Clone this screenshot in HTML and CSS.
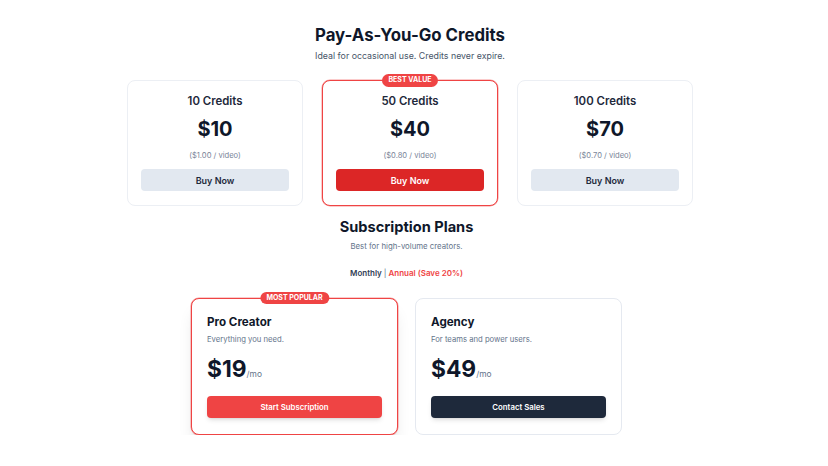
FILE: index.html
```html
<!DOCTYPE html>
<html lang="en">
<head>
<meta charset="utf-8">
<title>Pricing</title>
<link rel="stylesheet" href="styles.css">
</head>
<body>
<main class="page">
  <section class="credits">
    <h1 class="title">Pay-As-You-Go Credits</h1>
    <p class="subtitle">Ideal for occasional use. Credits never expire.</p>
    <div class="credit-grid">
      <div class="credit-card">
        <h3 class="credit-name">10 Credits</h3>
        <div class="credit-price">$10</div>
        <div class="credit-unit">($1.00 / video)</div>
        <button class="btn btn-light">Buy Now</button>
      </div>
      <div class="credit-card featured">
        <span class="badge">BEST VALUE</span>
        <h3 class="credit-name">50 Credits</h3>
        <div class="credit-price">$40</div>
        <div class="credit-unit">($0.80 / video)</div>
        <button class="btn btn-red">Buy Now</button>
      </div>
      <div class="credit-card">
        <h3 class="credit-name">100 Credits</h3>
        <div class="credit-price">$70</div>
        <div class="credit-unit">($0.70 / video)</div>
        <button class="btn btn-light">Buy Now</button>
      </div>
    </div>
  </section>
  <section class="subs">
    <h2 class="subs-title">Subscription Plans</h2>
    <p class="subs-desc">Best for high-volume creators.</p>
    <div class="toggle"><span class="t-month">Monthly</span> <span class="t-sep">|</span> <span class="t-annual">Annual (Save 20%)</span></div>
    <div class="plan-grid">
      <div class="plan-card popular">
        <span class="badge">MOST POPULAR</span>
        <h3 class="plan-name">Pro Creator</h3>
        <p class="plan-desc">Everything you need.</p>
        <div class="plan-price"><span class="amount">$19</span><span class="per">/mo</span></div>
        <button class="btn btn-plan btn-coral">Start Subscription</button>
      </div>
      <div class="plan-card">
        <h3 class="plan-name">Agency</h3>
        <p class="plan-desc">For teams and power users.</p>
        <div class="plan-price"><span class="amount">$49</span><span class="per">/mo</span></div>
        <button class="btn btn-plan btn-dark">Contact Sales</button>
      </div>
    </div>
  </section>
</main>
</body>
</html>
```
FILE: styles.css
```css
* { box-sizing: border-box; }
html, body { margin: 0; padding: 0; background: #ffffff; }
body {
  font-family: Inter, "Noto Sans", "Liberation Sans", sans-serif;
  color: #0f172a;
}
.page { padding-top: 22px; }
h1, h2, h3, p { margin: 0; }

.credits {
  width: 820px;
  display: flex;
  flex-direction: column;
  align-items: center;
}
.title {
  font-size: 16.8px;
  line-height: 26px;
  font-weight: 700;
  color: #0f172a;
}
.subtitle {
  margin-top: 1px;
  font-size: 8.8px;
  line-height: 13px;
  color: #475569;
}
.credit-grid {
  margin-top: 18px;
  display: grid;
  grid-template-columns: repeat(3, 176px);
  gap: 19px;
}
.credit-card {
  position: relative;
  border: 1px solid #eceff4;
  border-radius: 8px;
  padding: 12px 13px 14px;
  display: flex;
  flex-direction: column;
  align-items: stretch;
  text-align: center;
  background: #fff;
}
.credit-card.featured {
  border-color: #ef4444;
  box-shadow: 0 0 0 0.5px rgba(239, 68, 68, 0.55);
}
.credit-name {
  font-size: 11.4px;
  line-height: 17px;
  font-weight: 600;
  color: #1e293b;
}
.credit-price {
  margin-top: 7px;
  font-size: 20px;
  line-height: 24px;
  font-weight: 700;
  color: #0f172a;
}
.credit-unit {
  margin-top: 8.5px;
  font-size: 7.6px;
  line-height: 11px;
  color: #7a8598;
}
.btn {
  border: 0;
  font-family: inherit;
  font-weight: 600;
  height: 22px;
  border-radius: 4px;
  cursor: pointer;
}
.credit-card .btn { margin-top: 8.5px; font-size: 9px; }
.btn-light { background: #e2e8f0; color: #1e293b; }
.btn-red { background: #dc2626; color: #ffffff; }

.badge {
  position: absolute;
  top: -7px;
  left: 50%;
  transform: translateX(-50%);
  background: #ef4444;
  color: #fff;
  font-size: 7px;
  line-height: 12.5px;
  font-weight: 700;
  padding: 0 6.5px;
  border-radius: 999px;
  white-space: nowrap;
}

.subs {
  width: 813px;
  margin-top: 10.5px;
  display: flex;
  flex-direction: column;
  align-items: center;
}
.subs-title {
  font-size: 14.6px;
  line-height: 21px;
  font-weight: 700;
  color: #0f172a;
}
.subs-desc {
  margin-top: 2px;
  font-size: 7.8px;
  line-height: 12px;
  color: #64748b;
}
.toggle {
  margin-top: 15px;
  font-size: 8px;
  line-height: 12px;
  font-weight: 600;
}
.t-month { color: #334155; }
.t-sep { color: #64748b; font-weight: 400; }
.t-annual { color: #ef4444; }

.plan-grid {
  margin-top: 19px;
  display: grid;
  grid-template-columns: repeat(2, 207px);
  gap: 17px;
}
.plan-card {
  position: relative;
  border: 1px solid #e5e9f0;
  border-radius: 8px;
  padding: 14px 15px 16px;
  display: flex;
  flex-direction: column;
  background: #fff;
}
.plan-card.popular {
  border-color: #ef4444;
  box-shadow: 0 0 0 0.5px rgba(239, 68, 68, 0.55), 0 13px 16px -3px rgba(0,0,0,0.1), 0 5px 7px -4px rgba(0,0,0,0.1);
}
.plan-name {
  font-size: 11.6px;
  line-height: 18px;
  font-weight: 700;
  color: #0f172a;
}
.plan-desc {
  margin-top: 3px;
  font-size: 7.7px;
  line-height: 12px;
  color: #64748b;
}
.plan-price {
  margin-top: 9px;
  line-height: 28px;
}
.amount {
  font-size: 22.8px;
  font-weight: 700;
  color: #0f172a;
}
.per {
  font-size: 8.4px;
  color: #64748b;
}
.btn-plan {
  margin-top: 8px;
  font-size: 7.8px;
  box-shadow: 0 3px 5px -1px rgba(0,0,0,0.12), 0 2px 3px -2px rgba(0,0,0,0.1);
}
.btn-coral { background: #ef4444; color: #fff; }
.btn-dark { background: #1e293b; color: #fff; }
```
